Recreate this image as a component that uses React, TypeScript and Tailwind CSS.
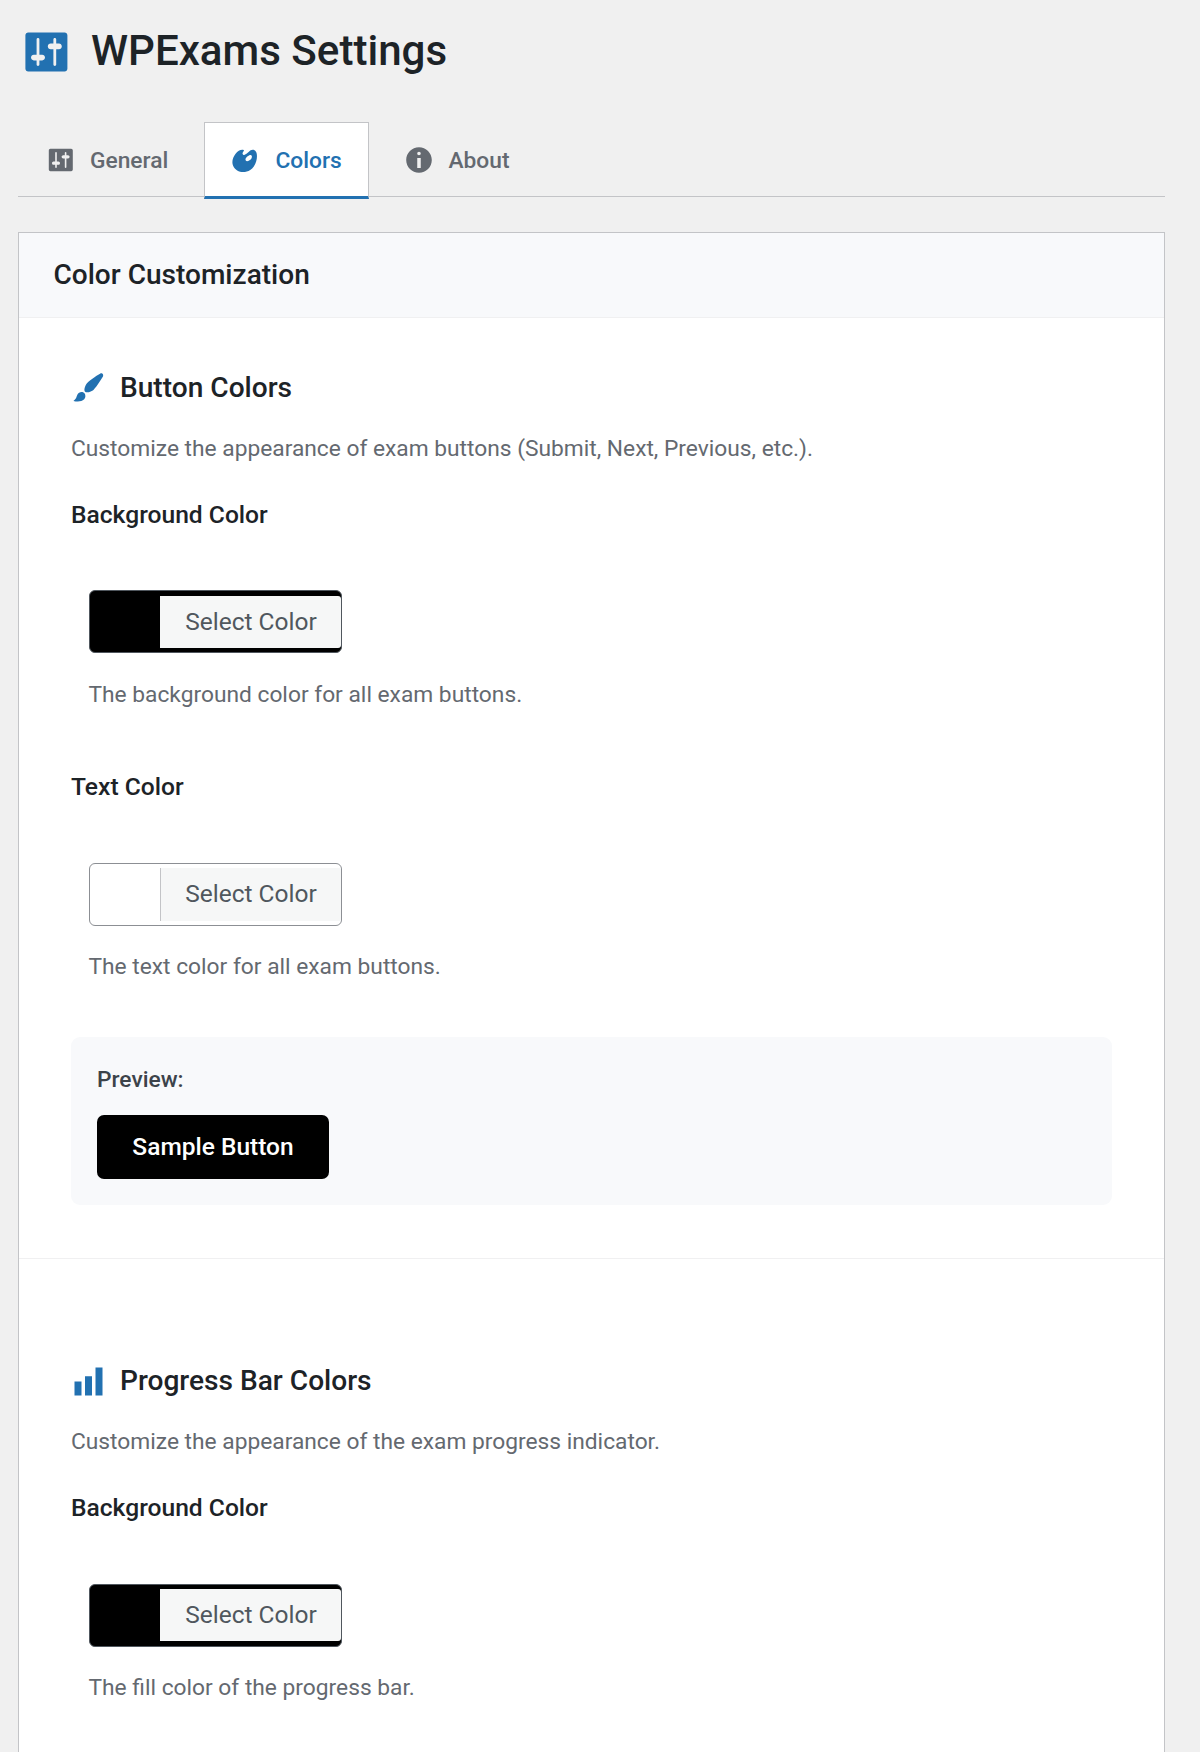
import type { ReactNode } from 'react'

type IconProps = { className?: string }

// Icônes de l'interface d'administration (grille de 20)
function SettingsIcon({ className }: IconProps) {
  return (
    <svg viewBox="0 0 20 20" className={className} fill="currentColor">
      <path
        fillRule="evenodd"
        d="M18 16V4c0-.55-.45-1-1-1H4c-.55 0-1 .45-1 1v12c0 .55.45 1 1 1h13c.55 0 1-.45 1-1zM8 11h1c.55 0 1 .45 1 1s-.45 1-1 1H8v1.500c0 .28-.22.5-.5.5s-.5-.22-.5-.5V13H6c-.55 0-1-.45-1-1s.45-1 1-1h1V5.500c0-.28.22-.5.5-.5s.5.22.5.5V11zM14 9v5.500c0 .28-.22.5-.5.5s-.5-.22-.5-.5V9h-1c-.55 0-1-.45-1-1s.45-1 1-1h1V5.500c0-.28.22-.5.5-.5s.5.22.5.5V7h1c.55 0 1 .45 1 1s-.45 1-1 1h-1z"
      />
    </svg>
  )
}

function PaletteIcon({ className }: IconProps) {
  return (
    <svg viewBox="0 0 20 20" className={className} fill="currentColor">
      <path
        fillRule="evenodd"
        d="M8.550 3.060c1.010.34-1.950 2.010-.1 3.130 1.040.63 3.310-2.220 4.450-2.860.97-.54 2.670-.65 3.530 1.230 1.090 2.380.14 8.570-3.790 11.060-3.970 2.500-8.970 1.230-10.700-2.660-2.010-4.530 3.120-11.090 6.610-9.900zm1.210 6.450c.73 1.640 4.700-.5 3.790-2.800-.59-1.490-4.480 1.250-3.790 2.800z"
      />
    </svg>
  )
}

function InfoIcon({ className }: IconProps) {
  return (
    <svg viewBox="0 0 20 20" className={className} fill="currentColor">
      <path
        fillRule="evenodd"
        d="M10 2c4.420 0 8 3.580 8 8s-3.580 8-8 8-8-3.580-8-8 3.580-8 8-8zm1.100 4c0-.6-.5-1.100-1.100-1.100S8.900 5.400 8.900 6s.5 1.100 1.100 1.100 1.100-.5 1.100-1.100zm0 9V8.800H8.900V15h2.200z"
      />
    </svg>
  )
}

function BrushIcon({ className }: IconProps) {
  return (
    <svg viewBox="0 0 20 20" className={className} fill="currentColor">
      <path d="M18.330 3.570s.27-.8-.31-1.360c-.53-.52-1.220-.24-1.220-.24-.61.3-5.760 3.470-7.670 5.570-.86.96-2.060 3.790-1.090 4.820.92.98 3.960-.17 4.790-1 2.060-2.060 5.210-7.170 5.500-7.790zM1.400 17.650c2.370-1.560 1.460-3.410 3.230-4.640.93-.65 2.220-.62 3.080.29.63.67.8 2.570-.16 3.460-1.570 1.450-4 1.550-6.150.89z" />
    </svg>
  )
}

function ChartIcon({ className }: IconProps) {
  return (
    <svg viewBox="0 0 20 20" className={className} fill="currentColor">
      <path d="M18 18V2h-4v16h4zm-6 0V7H8v11h4zm-6 0v-8H2v8h4z" />
    </svg>
  )
}

function ColorPicker({ color, light }: { color: string; light?: boolean }) {
  return (
    <button
      type="button"
      className={`flex h-[63px] w-[253px] items-center justify-end overflow-hidden rounded-[6px] border ${light ? 'border-[#8c8f94]' : 'border-[#50575e]'}`}
      style={{ backgroundColor: color }}
    >
      <span
        className={`flex w-[181px] items-center justify-center border-l bg-[#f6f7f7] text-[24.5px] text-[#50575e] ${light ? 'h-[53px] border-[#c3c4c7]' : 'h-[52px] rounded-r-[3px] border-[#f6f7f7] pt-[1px]'}`}
      >
        Select Color
      </span>
    </button>
  )
}

type FieldProps = { label: string; color: string; light?: boolean; help: string }

function ColorField({ label, color, light, help }: FieldProps) {
  return (
    <div>
      <h4 className="text-[24.6px] leading-[36px] font-medium text-[#1d2327]">{label}</h4>
      <div className="mt-[57.6px] pl-[18px]">
        <ColorPicker color={color} light={light} />
        <p className="-ml-[0.5px] mt-[23.6px] text-[22.75px] leading-[36px] text-[#646970]">{help}</p>
      </div>
    </div>
  )
}

type SectionProps = { icon: ReactNode; title: string; description: string; children: ReactNode }

function Section({ icon, title, description, children }: SectionProps) {
  return (
    <section className="px-[52px] pt-[52.1px]">
      <div className="flex h-[36px] items-center gap-[14px]">
        {icon}
        <h3 className="text-[28.1px] leading-[36px] font-medium text-[#1d2327]">{title}</h3>
      </div>
      <p className="mt-[25px] text-[22.75px] leading-[36px] text-[#646970]">{description}</p>
      <div className="mt-[29.8px]">{children}</div>
    </section>
  )
}

export default function App() {
  return (
    <div className="h-[1752px] overflow-hidden bg-[#f0f0f0] pl-[18px] font-['Roboto',sans-serif]">
      <header className="flex h-[122px] items-start gap-[18px]">
        <SettingsIcon className="-ml-[1px] mt-[24px] h-[56px] w-[56px] text-[#2271b1]" />
        <h1 className="mt-[26px] text-[42.1px] leading-[50px] font-medium text-[#1d2327]">WPExams Settings</h1>
      </header>

      <nav className="flex h-[75px] w-[1147px] border-b border-[#c3c4c7] text-[22.75px] font-medium text-[#646970]">
        <a className="flex h-[76px] w-[185.5px] items-center gap-[14px] pt-[1.6px] pl-[26px]">
          <SettingsIcon className="-mt-[1px] h-[32px] w-[32px]" />
          General
        </a>
        <a className="flex h-[77px] w-[165px] items-center gap-[14px] border border-b-[3px] border-[#c3c4c7] border-b-[#2271b1] bg-white pt-[3.6px] pl-[25px] text-[#2271b1]">
          <PaletteIcon className="-mt-[1px] h-[32px] w-[32px]" />
          Colors
        </a>
        <a className="flex h-[76px] items-center gap-[14px] pt-[1.6px] pl-[34px]">
          <InfoIcon className="-mt-[1px] h-[32px] w-[32px]" />
          About
        </a>
      </nav>

      <main className="mt-[35px] h-[1600px] w-[1147px] border border-[#c3c4c7] bg-white">
        <h2 className="flex h-[85px] items-center border-b border-[#f0f0f1] bg-[#f8f9fb] pl-[34.5px] text-[28.05px] font-medium text-[#1d2327]">
          Color Customization
        </h2>

        <Section
          icon={<BrushIcon className="-mt-[1px] h-[35px] w-[35px] text-[#2271b1]" />}
          title="Button Colors"
          description="Customize the appearance of exam buttons (Submit, Next, Previous, etc.)."
        >
          <ColorField label="Background Color" color="#000000" help="The background color for all exam buttons." />
          <div className="mt-[56px]">
            <ColorField label="Text Color" color="#ffffff" light help="The text color for all exam buttons." />
          </div>
          <div className="mt-[51.4px] h-[168px] rounded-[9px] bg-[#f8f9fb] px-[26px] pt-[25px]">
            <p className="text-[22.75px] leading-[36px] font-medium text-[#3c434a]">Preview:</p>
            <button type="button" className="mt-[17px] h-[64px] w-[232px] rounded-[7px] bg-black pt-[1px] text-[24.5px] font-medium text-white">
              Sample Button
            </button>
          </div>
        </Section>

        <div className="mt-[53px] border-t border-[#f0f0f1] pt-[52.4px]">
          <Section
            icon={<ChartIcon className="h-[35px] w-[35px] text-[#2271b1]" />}
            title="Progress Bar Colors"
            description="Customize the appearance of the exam progress indicator."
          >
            <ColorField label="Background Color" color="#000000" help="The fill color of the progress bar." />
          </Section>
        </div>
      </main>
    </div>
  )
}
